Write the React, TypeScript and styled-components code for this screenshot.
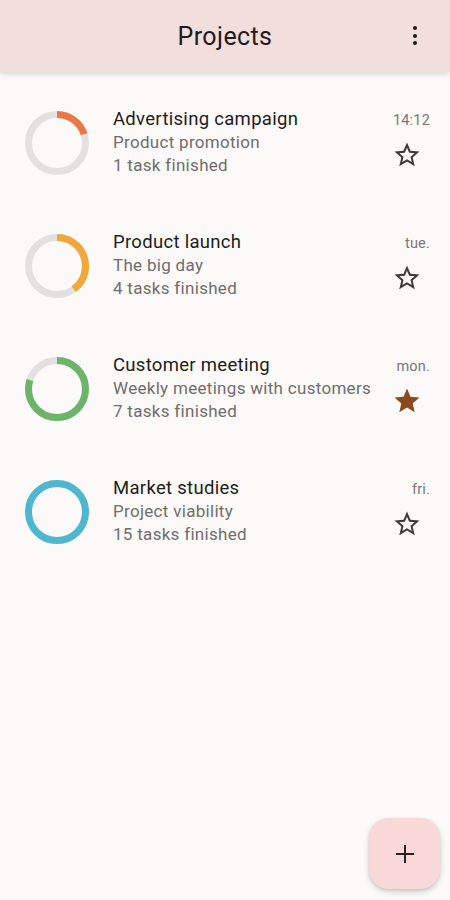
import React from "react";
import styled, { createGlobalStyle } from "styled-components";

const GlobalStyle = createGlobalStyle`
  html, body {
    margin: 0;
    padding: 0;
    background: #fcfaf9;
    font-family: Roboto, "Noto Sans", sans-serif;
  }
`;

const Page = styled.div`
  position: relative;
  width: 450px;
  height: 900px;
  background: #fcfaf9;
  overflow: hidden;
`;

const TopBar = styled.header`
  height: 72px;
  background: #f2dedd;
  box-shadow: 0 2px 5px rgba(0, 0, 0, 0.14);
  display: flex;
  align-items: center;
  justify-content: center;
  position: relative;
  z-index: 1;
`;

const Title = styled.h1`
  margin: 0;
  font-size: 25px;
  font-weight: 400;
  color: #1f1a1b;
  letter-spacing: 0.4px;
`;

const MenuButton = styled.div`
  position: absolute;
  right: 33px;
  top: 26px;
  display: flex;
  flex-direction: column;
  gap: 3.5px;
`;

const Dot = styled.span`
  width: 4px;
  height: 4px;
  border-radius: 50%;
  background: #1f1a1b;
`;

const List = styled.div`
  padding-top: 9px;
  display: flex;
  flex-direction: column;
`;

const Row = styled.div`
  height: 123px;
  display: flex;
  align-items: center;
  padding: 0 20px 0 25px;
`;

const RingBox = styled.div`
  width: 64px;
  height: 64px;
  flex-shrink: 0;
  margin-right: 24px;
`;

const Texts = styled.div`
  flex: 1;
  display: flex;
  flex-direction: column;
  line-height: 23px;
  min-width: 0;
`;

const Name = styled.div`
  font-size: 18.5px;
  color: #1d1b1b;
  letter-spacing: 0.3px;
`;

const Sub = styled.div`
  font-size: 17px;
  color: #716c6d;
  letter-spacing: 0.3px;
`;

const Side = styled.div`
  display: flex;
  flex-direction: column;
  align-items: flex-end;
  margin-top: -5px;
`;

const Time = styled.div`
  font-size: 14.5px;
  line-height: 20px;
  color: #7a7576;
  letter-spacing: 0.2px;
`;

const StarIcon = styled.svg`
  width: 30px;
  height: 30px;
  margin-top: 9px;
  margin-right: 8px;
`;

const Fab = styled.button`
  position: absolute;
  right: 10px;
  bottom: 11px;
  width: 71px;
  height: 71px;
  border: none;
  border-radius: 20px;
  background: #f9d8da;
  box-shadow: 0 3px 6px rgba(0, 0, 0, 0.16), 0 1px 3px rgba(0, 0, 0, 0.1);
  display: flex;
  align-items: center;
  justify-content: center;
  padding: 0;
`;

type Project = {
  name: string;
  sub: string;
  tasks: string;
  time: string;
  progress: number;
  color: string;
  starred: boolean;
};

const projects: Project[] = [
  { name: "Advertising campaign", sub: "Product promotion", tasks: "1 task finished", time: "14:12", progress: 0.2, color: "#e9774a", starred: false },
  { name: "Product launch", sub: "The big day", tasks: "4 tasks finished", time: "tue.", progress: 0.4, color: "#f1a73c", starred: false },
  { name: "Customer meeting", sub: "Weekly meetings with customers", tasks: "7 tasks finished", time: "mon.", progress: 0.8, color: "#6db46b", starred: true },
  { name: "Market studies", sub: "Project viability", tasks: "15 tasks finished", time: "fri.", progress: 1, color: "#4cb7cf", starred: false },
];

const Ring = ({ progress, color }: { progress: number; color: string }) => {
  const r = 28.5;
  const c = 2 * Math.PI * r;
  return (
    <svg width="64" height="64" viewBox="0 0 64 64">
      <circle cx="32" cy="32" r={r} fill="none" stroke="#e3e1e0" strokeWidth="7" />
      <circle
        cx="32"
        cy="32"
        r={r}
        fill="none"
        stroke={color}
        strokeWidth="7"
        strokeDasharray={`${c * progress} ${c}`}
        transform="rotate(-90 32 32)"
      />
    </svg>
  );
};

const Star = ({ filled }: { filled: boolean }) => (
  <StarIcon viewBox="0 0 24 24">
    {filled ? (
      <path fill="#8a4a1c" d="M12 17.27L18.18 21l-1.64-7.03L22 9.24l-7.19-.62L12 2 9.19 8.63 2 9.24l5.46 4.73L5.82 21z" />
    ) : (
      <path
        fill="#3f3a3b"
        d="M22 9.24l-7.19-.62L12 2 9.19 8.63 2 9.24l5.46 4.73L5.82 21 12 17.27 18.18 21l-1.63-7.03L22 9.24zM12 15.4l-3.760 2.27 1-4.28-3.32-2.88 4.38-.38L12 6.1l1.71 4.04 4.38.38-3.32 2.88 1 4.28L12 15.4z"
      />
    )}
  </StarIcon>
);

export default function App() {
  return (
    <Page>
      <GlobalStyle />
      <TopBar>
        <Title>Projects</Title>
        <MenuButton>
          <Dot />
          <Dot />
          <Dot />
        </MenuButton>
      </TopBar>
      <List>
        {projects.map((p) => (
          <Row key={p.name}>
            <RingBox>
              <Ring progress={p.progress} color={p.color} />
            </RingBox>
            <Texts>
              <Name>{p.name}</Name>
              <Sub>{p.sub}</Sub>
              <Sub>{p.tasks}</Sub>
            </Texts>
            <Side>
              <Time>{p.time}</Time>
              <Star filled={p.starred} />
            </Side>
          </Row>
        ))}
      </List>
      <Fab>
        <svg width="20" height="20" viewBox="0 0 20 20">
          <path d="M10 1v18M1 10h18" stroke="#2a2122" strokeWidth="2" />
        </svg>
      </Fab>
    </Page>
  );
}
